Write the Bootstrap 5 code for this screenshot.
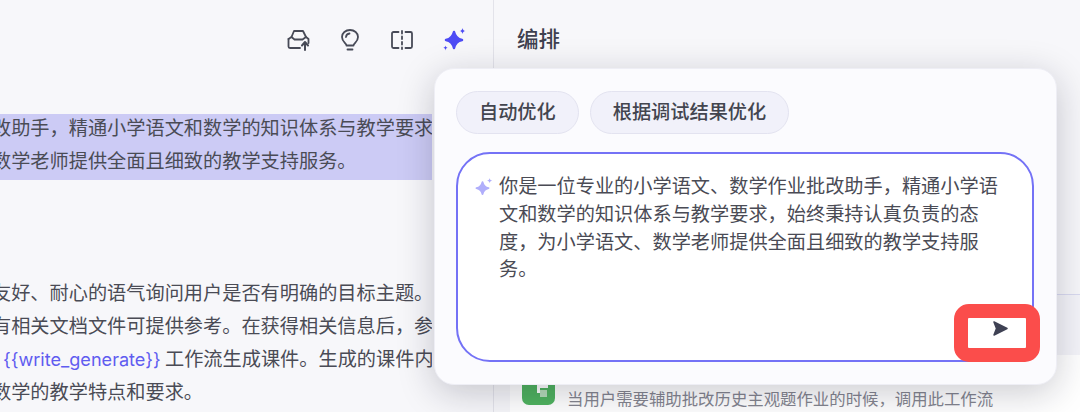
<!doctype html>
<html lang="zh">
<head>
    <meta charset="utf-8">
    <meta name="viewport" content="width=device-width, initial-scale=1">
    <link href="https://cdn.jsdelivr.net/npm/bootstrap@5.3.3/dist/css/bootstrap.min.css" rel="stylesheet">
    <title>编排</title>
    <style>
        html, body { height: 412px; overflow: hidden; }
        body { background: #f7f7fa; color: #4a4b55; font-family: "Liberation Sans", "Noto Sans CJK SC", sans-serif; }
        .stage { height: 412px; }
        .left-pane { width: 494px; height: 412px; border-right: 1px solid #e3e3ea; overflow: hidden; flex: none; }
        .tool-row { height: 80px; padding-right: 27px; gap: 28px; }
        .tool-row svg { width: 24px; height: 24px; display: block; }
        .prompt-block { width: 432px; margin-top: 34px; font-size: 19.2px; line-height: 33px; overflow: hidden; }
        .prompt-line { white-space: nowrap; margin-left: -8px; }
        .prompt-hl { background: #cccbf5; height: 66px; display: flow-root; }
        .prompt-hl .prompt-line:first-child { margin-top: -2px; }
        .prompt-gap { height: 97px; }
        .var-line { margin-left: 3px; word-spacing: -1px; }
        .var-name { color: #5f5cf0; font-family: Inter, sans-serif; font-size: 18.1px; }
        .right-pane { min-width: 0; }
        .right-title { padding: 24px 0 0 23px; font-size: 21.5px; font-weight: 500; line-height: 32px; color: #3f4150; }
        .tool-card { margin: 238px 0 0 16px; height: 61px; border-top: 1px solid #d9daf0; background: #f4f4f9; }
        .tool-row2 { margin-left: 16px; height: 57px; padding: 17px 0 0 12px; background: #fff; }
        .tool-icon { width: 33px; height: 33px; flex: none; display: block; }
        .tool-desc { margin-left: 12px; margin-top: 16px; font-size: 16.4px; line-height: 22px; color: #84858f; white-space: nowrap; }
        .opt-popup { position: absolute; left: 434px; top: 68px; width: 623px; height: 317px; padding: 22px; background: #fbfbfe; border: 1px solid #eeeef5; border-radius: 20px; box-shadow: 0 8px 36px rgba(20, 20, 40, .22); }
        .opt-btn { height: 43px; padding: 0 22px; border-radius: 22px; background: #f1f1fa; border: 1px solid #e3e3f0; font-size: 19.2px; font-weight: 500; color: #43454f; line-height: 1; }
        .opt-btns { gap: 11px; margin-left: -1px; }
        .opt-input { margin: 18px 0 0 -1px; height: 210px; width: 578px; background: #fff; border: 2px solid #7472f6; border-radius: 34px; padding: 19px 0 0 17px; gap: 6px; }
        .opt-input svg { width: 18px; height: 18px; flex: none; margin-top: 5px; }
        .opt-text { width: 510px; font-size: 19.2px; line-height: 27.8px; color: #4a4b55; }
        .send-mark { position: absolute; left: 519px; top: 235px; width: 86px; height: 58px; border: 14px solid #fb4d4b; border-radius: 15px; background: #fff; }
        .send-mark svg { position: absolute; left: 25px; top: 3px; width: 15px; height: 15px; }
    </style>
</head>
<body>
    <div class="stage d-flex">
        <!-- left side, prompt text -->
        <div class="left-pane">
            <div class="tool-row d-flex align-items-center justify-content-end">
                <svg viewBox="0 0 24 24" fill="none" stroke="#474a57" stroke-width="1.8" stroke-linejoin="round" stroke-linecap="round">
                    <path d="M5.500 9 8 3h9l3 6"/>
                    <path d="M2.500 11 5.500 9l3 2.500h8L20 9l2.500 2v4"/>
                    <path d="M2.500 11v7.500A1.500 1.500 0 0 0 4 20h10"/>
                    <path d="M19 22v-7.500M16 17.500l3-3.500 3 3.500" stroke-width="2"/>
                </svg>
                <svg viewBox="0 0 24 24" fill="none" stroke="#474a57" stroke-width="1.8" stroke-linecap="round" stroke-linejoin="round">
                    <path d="M8.500 17.500c0-2.500-4.500-3.500-4.500-8.500a8 7 0 0 1 16 0c0 5-4.500 6-4.500 8.500z"/>
                    <path d="M9.500 21.500h5"/>
                    <path d="M8 9a4 4 0 0 1 3.500-3.500"/>
                </svg>
                <svg viewBox="0 0 24 24" fill="none" stroke="#474a57" stroke-width="1.8" stroke-linecap="round" stroke-linejoin="round">
                    <path d="M8.500 4H3.500A1.500 1.500 0 0 0 2 5.500v13A1.500 1.500 0 0 0 3.500 20h5"/>
                    <path d="M15.500 4h5A1.500 1.500 0 0 1 22 5.500v13a1.500 1.500 0 0 1-1.500 1.500h-5"/>
                    <path d="M12 3v18" stroke-dasharray="2.500 3"/>
                </svg>
                <svg viewBox="0 0 24 24" fill="#4d4bf5">
                    <path d="M12 4c1 4.500 3 7 8 8-5 1-7 3.500-8 8-1-4.500-3-7-8-8 5-1 7-3.500 8-8z" stroke="#4d4bf5" stroke-width="2.500" stroke-linejoin="round"/>
                    <path d="M20.500 0c.4 2 1 2.600 3 3-2 .4-2.600 1-3 3-.4-2-1-2.600-3-3 2-.4 2.600-1 3-3z"/>
                    <path d="M3.500 17.500c.3 1.500.8 2 2.300 2.300-1.500.3-2 .8-2.300 2.700-.3-1.900-.8-2.400-2.300-2.700 1.500-.3 2-.8 2.300-2.300z"/>
                </svg>
            </div>
            <div class="prompt-block">
                <div class="prompt-hl">
                    <div class="prompt-line">改助手，精通小学语文和数学的知识体系与教学要求</div>
                    <div class="prompt-line">数学老师提供全面且细致的教学支持服务。</div>
                </div>
                <div class="prompt-gap"></div>
                <div class="prompt-line">友好、耐心的语气询问用户是否有明确的目标主题。</div>
                <div class="prompt-line">有相关文档文件可提供参考。在获得相关信息后，参</div>
                <div class="prompt-line var-line"><span class="var-name">{{write_generate}}</span> 工作流生成课件。生成的课件内</div>
                <div class="prompt-line">数学的教学特点和要求。</div>
            </div>
        </div>

        <!-- right side, orchestration -->
        <div class="right-pane flex-grow-1">
            <div class="right-title">编排</div>
            <div class="tool-card"></div>
            <div class="tool-row2 d-flex align-items-start">
                <svg class="tool-icon" viewBox="0 0 33 33">
                    <rect width="33" height="33" rx="7" fill="#4fb35f"/>
                    <path d="M8 8h7v13h3v-5h8V8z" fill="#fff"/>
                    <rect x="18" y="18" width="7" height="7" fill="#b5dcb9"/>
                </svg>
                <div class="tool-desc">当用户需要辅助批改历史主观题作业的时候，调用此工作流</div>
            </div>
        </div>
    </div>

    <!-- prompt optimise popup -->
    <div class="opt-popup">
        <div class="opt-btns d-flex">
            <button type="button" class="opt-btn">自动优化</button>
            <button type="button" class="opt-btn">根据调试结果优化</button>
        </div>
        <div class="opt-input d-flex align-items-start">
            <svg viewBox="0 0 24 24" fill="#b0aefb">
                <path d="M10 5.500c1 4.500 3 7 8 8-5 1-7 3.500-8 8-1-4.500-3-7-8-8 5-1 7-3.500 8-8z" stroke="#b0aefb" stroke-width="2.500" stroke-linejoin="round"/>
                <path d="M19.500 0c.4 2.200 1 2.900 3.500 3.500-2.500.6-3.100 1.300-3.500 3.500-.4-2.200-1-2.900-3.500-3.500 2.500-.6 3.100-1.300 3.500-3.500z"/>
            </svg>
            <div class="opt-text">你是一位专业的小学语文、数学作业批改助手，精通小学语文和数学的知识体系与教学要求，始终秉持认真负责的态度，为小学语文、数学老师提供全面且细致的教学支持服务。</div>
        </div>
        <div class="send-mark">
            <svg viewBox="0 0 15 15" fill="#3f4254"><path d="M1 1 14 7.500 1 14 3.500 7.500z" stroke="#3f4254" stroke-width="1.500" stroke-linejoin="round"/></svg>
        </div>
    </div>

    <script src="https://cdn.jsdelivr.net/npm/bootstrap@5.3.3/dist/js/bootstrap.bundle.min.js"></script>
</body>
</html>
